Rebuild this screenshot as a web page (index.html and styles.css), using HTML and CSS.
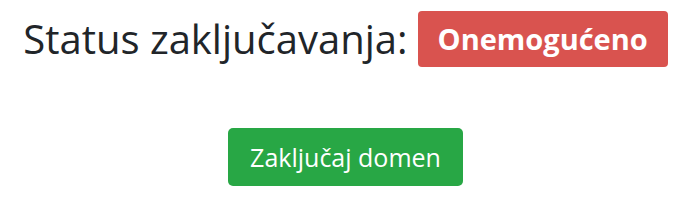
FILE: index.html
```html
<!DOCTYPE html>
<html>
<head>
<meta charset="utf-8">
<link rel="stylesheet" href="styles.css">
</head>
<body>
<div class="page">
  <h1 class="status">Status zaključavanja: <span class="badge">Onemogućeno</span></h1>
  <button class="btn">Zaključaj domen</button>
</div>
</body>
</html>
```
FILE: styles.css
```css
body {
  margin: 0;
  font-family: "Open Sans", sans-serif;
  color: #212529;
  background: #fff;
}
.page {
  display: flex;
  flex-direction: column;
  align-items: center;
  padding: 11px 4px 0 0;
}
.status {
  margin: 0;
  font-size: 40px;
  font-weight: 400;
  line-height: 56px;
  display: flex;
  align-items: center;
  gap: 10px;
}
.badge {
  background: #d9534f;
  color: #fff;
  font-weight: 700;
  font-size: 29px;
  line-height: 56px;
  padding: 0 20px;
  border-radius: 4px;
}
.btn {
  margin-top: 61px;
  background: #28a745;
  color: #fff;
  border: none;
  border-radius: 5px;
  font-family: "Open Sans", sans-serif;
  font-size: 25px;
  height: 58px;
  padding: 0 22px;
}
```
